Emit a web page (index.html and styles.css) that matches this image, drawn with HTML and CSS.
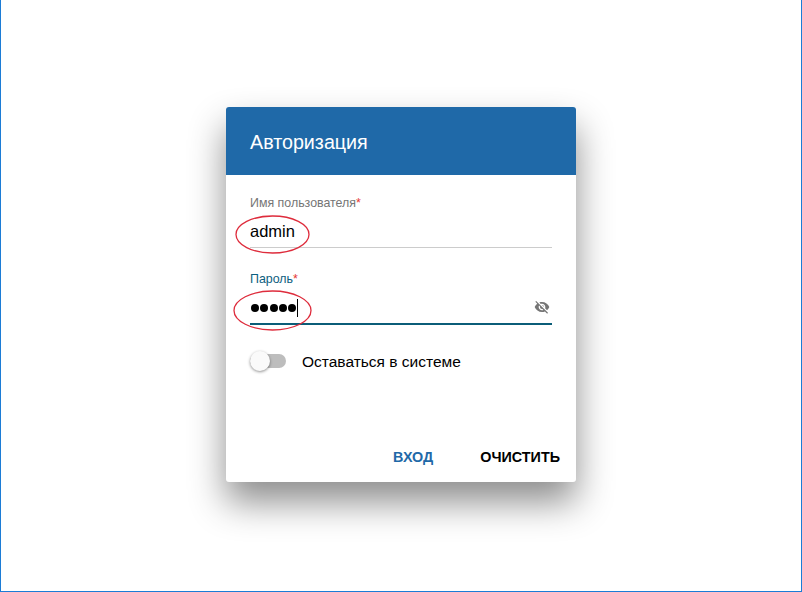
FILE: index.html
```html
<!DOCTYPE html>
<html lang="en">
<head>
    <meta charset="UTF-8">
    <title>Авторизация</title>
    <link rel="stylesheet" href="styles.css">
</head>
<body>

    <div class="frame">
        <div class="card">
            <div class="card-header">Авторизация</div>

            <form class="card-body">
                <div class="field">
                    <label class="field-label">Имя пользователя<span class="req">*</span></label>
                    <div class="field-input">admin</div>
                    <svg class="mark mark-user" viewBox="0 0 75 39"><ellipse cx="37.5" cy="19.5" rx="36.5" ry="18.5"/></svg>
                </div>

                <div class="field field-active">
                    <label class="field-label">Пароль<span class="req">*</span></label>
                    <div class="field-input">
                        <span class="dots"><i></i><i></i><i></i><i></i><i></i></span><span class="caret"></span>
                        <svg class="eye" viewBox="0 0 24 24"><path d="M12 7c2.76 0 5 2.24 5 5 0 .65-.13 1.26-.36 1.83l2.92 2.92c1.51-1.26 2.7-2.89 3.43-4.75-1.73-4.39-6-7.5-11-7.5-1.4 0-2.74.25-3.98.7l2.16 2.16C10.74 7.13 11.35 7 12 7zM2 4.27l2.28 2.28.46.46C3.08 8.3 1.78 10.02 1 12c1.73 4.39 6 7.5 11 7.5 1.55 0 3.03-.3 4.38-.84l.42.42L19.73 22 21 20.73 3.27 3 2 4.27zM7.53 9.8l1.55 1.55c-.05.21-.08.43-.08.65 0 1.66 1.34 3 3 3 .22 0 .44-.03.65-.08l1.55 1.55c-.67.33-1.41.53-2.2.53-2.76 0-5-2.24-5-5 0-.79.2-1.53.53-2.2zm4.31-.78l3.15 3.15.02-.16c0-1.66-1.34-3-3-3l-.17.01z"/></svg>
                    </div>
                    <svg class="mark mark-pass" viewBox="0 0 79 41"><ellipse cx="39.5" cy="20.5" rx="38.5" ry="19.5"/></svg>
                </div>

                <div class="toggle-row">
                    <span class="toggle"><span class="toggle-thumb"></span></span>
                    <span class="toggle-label">Оставаться в системе</span>
                </div>
            </form>

            <div class="card-actions">
                <button type="button" class="btn btn-primary">Вход</button>
                <button type="button" class="btn">Очистить</button>
            </div>
        </div>
    </div>

</body>
</html>
```

FILE: styles.css
```css
* { box-sizing: border-box; }
body { margin: 0; font-family: "Liberation Sans", Arial, sans-serif; color: #000; background: #fff; }
.frame { width: 802px; height: 592px; display: flex; align-items: center; justify-content: center; padding-bottom: 3px; border: 1px solid #1c7cd6; border-top: none; }
.card { width: 350px; height: 375px; background: #fff; border-radius: 3px; display: flex; flex-direction: column; box-shadow: 0 20px 36px rgba(0, 0, 0, 0.45); }
.card-header { height: 68px; padding: 4px 24px 0; display: flex; align-items: center; background: #1f69a8; color: #fff; font-size: 19.7px; border-radius: 3px 3px 0 0; }
.card-body { flex: 1; padding: 19px 24px 0; }
.field { position: relative; height: 76px; }
.field-label { display: block; height: 17px; font-size: 12.4px; line-height: 19px; color: #757575; }
.req { color: #e53935; }
.field-input { position: relative; height: 37px; padding-top: 9px; font-size: 16.5px; line-height: 22px; border-bottom: 1px solid #ccc; }
.field-active .field-label { color: #0d6080; }
.field-active .field-input { height: 38px; border-bottom: 2px solid #0b5d78; display: flex; align-items: center; padding-top: 6px; }
.dots { display: flex; gap: 1.25px; margin-left: 1px; }
.dots i { width: 8px; height: 8px; border-radius: 50%; background: #000; }
.caret { width: 1px; height: 18px; margin-left: 1px; background: #000; }
.eye { position: absolute; right: 2px; top: 12px; width: 16px; height: 16px; fill: #757575; }
.mark { position: absolute; fill: none; stroke: #de2c3c; stroke-width: 1.3; pointer-events: none; }
.mark-user { left: -15px; top: 21px; width: 75px; height: 39px; }
.mark-pass { left: -17px; top: 20px; width: 79px; height: 41px; }
.toggle-row { display: flex; align-items: center; gap: 16px; margin-top: 3px; height: 24px; }
.toggle { position: relative; width: 36px; height: 14px; border-radius: 7px; background: #bdbdbd; }
.toggle-thumb { position: absolute; left: 0; top: -3px; width: 20px; height: 20px; border-radius: 50%; background: #fafafa; box-shadow: 0 1px 3px rgba(0, 0, 0, 0.45); }
.toggle-label { font-size: 15.5px; padding-top: 2px; }
.card-actions { height: 52px; display: flex; justify-content: flex-end; align-items: flex-end; gap: 47px; padding: 0 16px 15px 0; }
.btn { padding: 0; border: none; background: none; font-family: "Liberation Sans", Arial, sans-serif; font-size: 14.35px; font-weight: bold; text-transform: uppercase; line-height: 20px; color: #000; cursor: pointer; }
.btn-primary { color: #1f69a8; }
```
